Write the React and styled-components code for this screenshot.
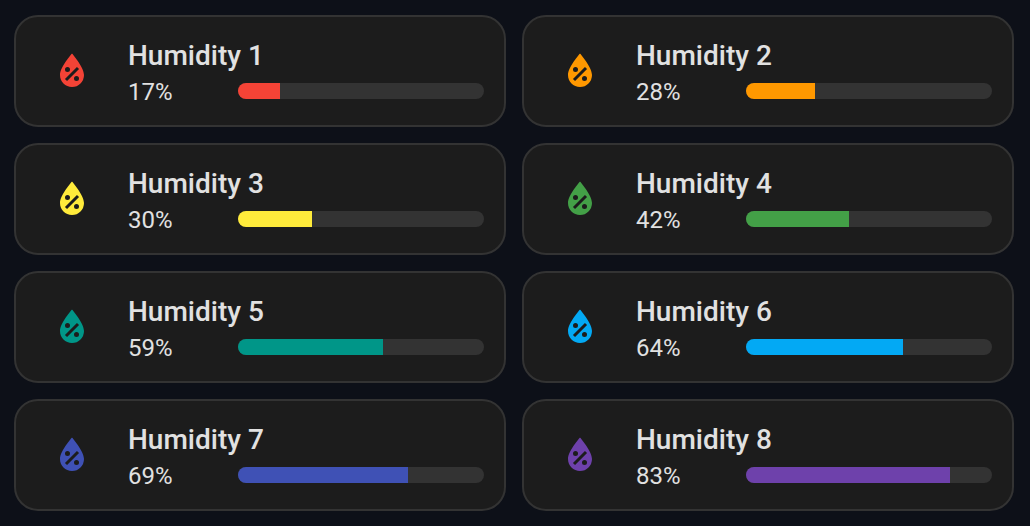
import React from "react";
import styled, { createGlobalStyle } from "styled-components";

const GlobalStyle = createGlobalStyle`
  *, *::before, *::after { box-sizing: border-box; }
  body {
    margin: 0;
    background: #0d1018;
    color: #e1e1e1;
    font-family: Roboto, "Liberation Sans", sans-serif;
  }
`;

const Dashboard = styled.main`
  display: grid;
  grid-template-columns: 1fr 1fr;
  gap: 16px;
  padding: 15px 16px 15px 14px;
`;

const Card = styled.article`
  display: flex;
  align-items: center;
  height: 112px;
  padding: 0 20px;
  border: 2px solid #333333;
  border-radius: 24px;
  background: #1c1c1c;
`;

const IconSlot = styled.div`
  flex: none;
  display: flex;
  justify-content: center;
  width: 72px;
  color: ${(p) => p.$color};
`;

const DropIcon = styled.svg`
  display: block;
  width: 48px;
  height: 48px;
  fill: currentColor;
`;

const Content = styled.div`
  flex: 1;
  min-width: 0;
  padding: 6px 0 0 20px;
`;

const Name = styled.h2`
  margin: 0;
  font-size: 28px;
  line-height: 34px;
  font-weight: 500;
  white-space: nowrap;
`;

const Reading = styled.div`
  display: flex;
  align-items: center;
`;

const Value = styled.span`
  flex: none;
  width: 110px;
  padding-top: 2px;
  font-size: 24px;
  line-height: 34px;
`;

const Track = styled.div`
  flex: 1;
  height: 16px;
  overflow: hidden;
  border-radius: 8px;
  background: #333333;
`;

const Fill = styled.div`
  height: 100%;
  background: ${(p) => p.$color};
`;

const sensors = [
  { name: "Humidity 1", value: 17, color: "#f44336" },
  { name: "Humidity 2", value: 28, color: "#ff9800" },
  { name: "Humidity 3", value: 30, color: "#ffeb3b" },
  { name: "Humidity 4", value: 42, color: "#43a047" },
  { name: "Humidity 5", value: 59, color: "#009688" },
  { name: "Humidity 6", value: 64, color: "#03a9f4" },
  { name: "Humidity 7", value: 69, color: "#3f51b5" },
  { name: "Humidity 8", value: 83, color: "#6e41ab" },
];

function HumidityCard({ name, value, color }) {
  return (
    <Card>
      <IconSlot $color={color}>
        <DropIcon viewBox="0 0 24 24" aria-hidden="true">
          <path d="M12,3.25C12,3.25 6,10 6,14C6,17.32 8.69,20 12,20A6,6 0 0,0 18,14C18,10 12,3.25 12,3.25M14.47,9.97L15.53,11.03L9.53,17.03L8.47,15.97M9.75,10A1.25,1.25 0 0,1 11,11.25A1.25,1.25 0 0,1 9.75,12.5A1.25,1.25 0 0,1 8.5,11.25A1.25,1.25 0 0,1 9.75,10M14.25,14.5A1.25,1.25 0 0,1 15.5,15.75A1.25,1.25 0 0,1 14.25,17A1.25,1.25 0 0,1 13,15.75A1.25,1.25 0 0,1 14.25,14.5Z" />
        </DropIcon>
      </IconSlot>
      <Content>
        <Name>{name}</Name>
        <Reading>
          <Value>{value}%</Value>
          <Track role="progressbar" aria-label={name} aria-valuenow={value} aria-valuemin={0} aria-valuemax={100}>
            <Fill $color={color} style={{ width: `${value}%` }} />
          </Track>
        </Reading>
      </Content>
    </Card>
  );
}

export default function App() {
  return (
    <>
      <GlobalStyle />
      <Dashboard>
        {sensors.map((sensor) => (
          <HumidityCard key={sensor.name} {...sensor} />
        ))}
      </Dashboard>
    </>
  );
}
